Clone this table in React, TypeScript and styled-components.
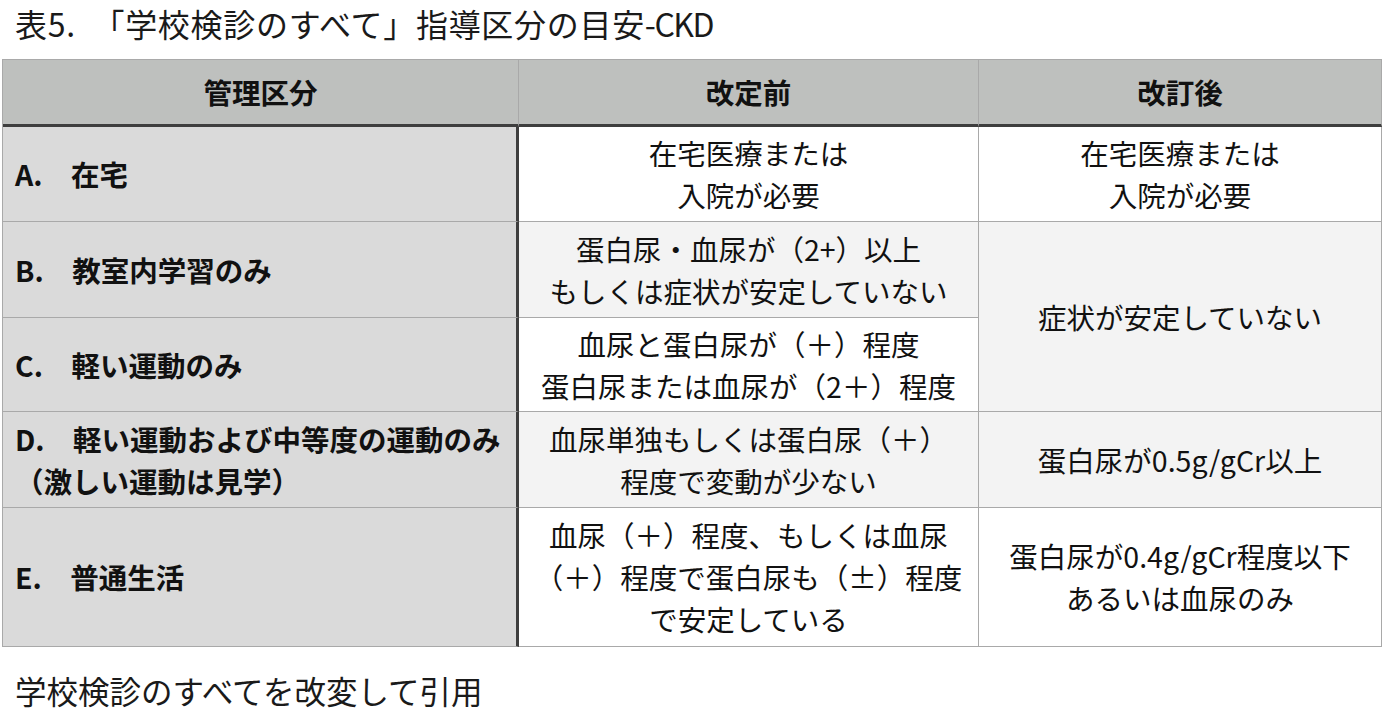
import React from "react";
import styled, { createGlobalStyle } from "styled-components";

const GlobalStyle = createGlobalStyle`
  html, body {
    margin: 0;
    padding: 0;
    background: #ffffff;
  }
  body {
    font-family: "Noto Sans CJK JP", "Noto Sans", sans-serif;
    color: #111111;
  }
`;

const Page = styled.div`
  width: 1385px;
  background: #ffffff;
`;

const Title = styled.h1`
  margin: 0;
  padding-left: 15px;
  font-size: 32px;
  font-weight: 400;
  line-height: 46px;
  letter-spacing: 0.7px;
  white-space: pre;
  color: #1a1a1a;
`;

const Narrow = styled.span`
  letter-spacing: -1.5px;
`;

const Grid = styled.div`
  display: grid;
  grid-template-columns: 516px 460px 403px;
  grid-template-rows: 67px 95px 96px 94px 96px 139px;
  width: max-content;
  margin: 13px 0 0 2px;
  border-top: 1px solid #a9a9a9;
  border-left: 1px solid #a9a9a9;
`;

type CellProps = {
  $bg?: string;
  $left?: boolean;
  $head?: boolean;
  $thick?: boolean;
  $span?: number;
};

const Cell = styled.div<CellProps>`
  box-sizing: border-box;
  display: flex;
  align-items: center;
  justify-content: ${(p) => (p.$left ? "flex-start" : "center")};
  text-align: ${(p) => (p.$left ? "left" : "center")};
  padding: ${(p) => (p.$left ? "0 0 0 12px" : "0 2px")};
  background: ${(p) => p.$bg ?? "#ffffff"};
  border-right: ${(p) => (p.$thick ? "3px solid #3e3e3e" : "1px solid #a9a9a9")};
  border-bottom: ${(p) => (p.$head ? "3px solid #3e3e3e" : "1px solid #a9a9a9")};
  grid-row: ${(p) => (p.$span ? `span ${p.$span}` : "auto")};
  font-size: 28.5px;
  font-weight: ${(p) => (p.$head || p.$left ? 700 : 400)};
  line-height: 42px;
  white-space: nowrap;
  color: #111111;
`;

const Note = styled.p`
  margin: 25px 0 0;
  padding-left: 15px;
  font-size: 31.5px;
  font-weight: 400;
  line-height: 36px;
  color: #1a1a1a;
`;

const HEAD = "#bec0be";
const LABEL = "#dadada";
const ALT = "#f3f3f3";

const Lines = ({ lines }: { lines: string[] }) => (
  <div>
    {lines.map((l, i) => (
      <div key={i}>{l}</div>
    ))}
  </div>
);

export default function App() {
  return (
    <Page>
      <GlobalStyle />
      <Title>
        {"表5.\u3000「学校検診のすべて」指導区分の目安"}
        <Narrow>-CKD</Narrow>
      </Title>
      <Grid>
        <Cell $head $bg={HEAD}>管理区分</Cell>
        <Cell $head $bg={HEAD}>改定前</Cell>
        <Cell $head $bg={HEAD}>改訂後</Cell>

        <Cell $left $thick $bg={LABEL}>A.　在宅</Cell>
        <Cell><Lines lines={["在宅医療または", "入院が必要"]} /></Cell>
        <Cell><Lines lines={["在宅医療または", "入院が必要"]} /></Cell>

        <Cell $left $thick $bg={LABEL}>B.　教室内学習のみ</Cell>
        <Cell $bg={ALT}><Lines lines={["蛋白尿・血尿が（2+）以上", "もしくは症状が安定していない"]} /></Cell>
        <Cell $bg={ALT} $span={2}>症状が安定していない</Cell>

        <Cell $left $thick $bg={LABEL}>C.　軽い運動のみ</Cell>
        <Cell><Lines lines={["血尿と蛋白尿が（＋）程度", "蛋白尿または血尿が（2＋）程度"]} /></Cell>

        <Cell $left $thick $bg={LABEL}><Lines lines={["D.　軽い運動および中等度の運動のみ", "（激しい運動は見学）"]} /></Cell>
        <Cell $bg={ALT}><Lines lines={["血尿単独もしくは蛋白尿（＋）", "程度で変動が少ない"]} /></Cell>
        <Cell $bg={ALT}>蛋白尿が0.5g/gCr以上</Cell>

        <Cell $left $thick $bg={LABEL}>E.　普通生活</Cell>
        <Cell><Lines lines={["血尿（＋）程度、もしくは血尿", "（＋）程度で蛋白尿も（±）程度", "で安定している"]} /></Cell>
        <Cell><Lines lines={["蛋白尿が0.4g/gCr程度以下", "あるいは血尿のみ"]} /></Cell>
      </Grid>
      <Note>学校検診のすべてを改変して引用</Note>
    </Page>
  );
}
